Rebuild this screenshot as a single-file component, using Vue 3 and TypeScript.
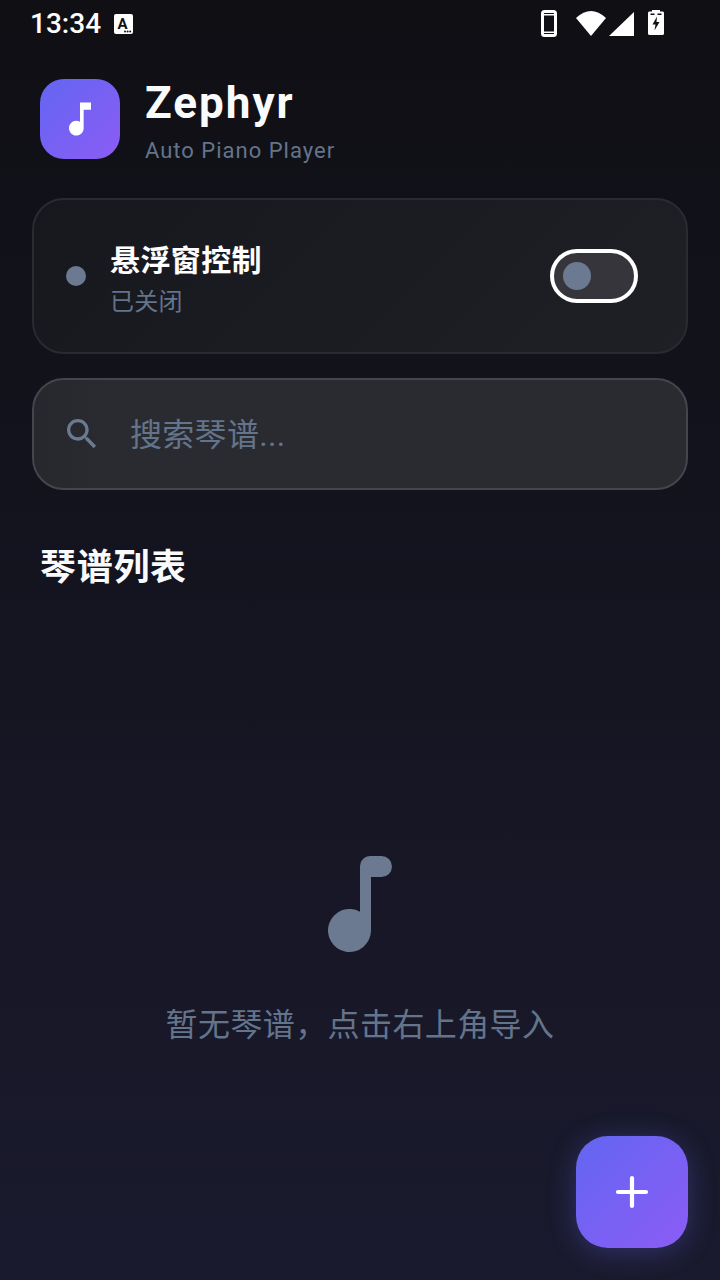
<template>
  <div class="screen">
    <div class="status-bar">
      <div class="status-left">
        <span class="clock">13:34</span>
        <svg class="status-a" viewBox="0 0 19 20" aria-hidden="true">
          <rect x="0" y="0" width="19" height="20" rx="2" fill="#fff" />
          <text x="8.500" y="14.500" text-anchor="middle" class="status-a-letter">A</text>
          <circle cx="11" cy="17.500" r="1" fill="#111" />
          <circle cx="13.600" cy="17.500" r="1" fill="#111" />
          <circle cx="16.200" cy="17.500" r="1" fill="#111" />
        </svg>
      </div>
      <div class="status-right">
        <svg class="phone" width="16" height="27" viewBox="0 0 16 27" aria-hidden="true">
          <rect x="1.500" y="1.500" width="13" height="24" rx="2" fill="none" stroke="#fff" stroke-width="3" />
          <rect x="1" y="4" width="14" height="1.500" fill="#fff" />
          <rect x="1" y="21.500" width="14" height="1.500" fill="#fff" />
        </svg>
        <svg class="wifi" width="30" height="25" viewBox="0 0 30 25" aria-hidden="true">
          <path d="M0 7Q15-7 30 7L15 25z" fill="#fff" />
        </svg>
        <svg class="signal" width="25" height="24" viewBox="0 0 25 24" aria-hidden="true">
          <path d="M25 0v24H0z" fill="#fff" />
        </svg>
        <svg class="battery" width="16" height="25" viewBox="0 0 16 25" aria-hidden="true">
          <path
            fill="#fff"
            d="M4 0h8v1.500h2.500c.8 0 1.500.7 1.500 1.500v20.500c0 .8-.7 1.500-1.500 1.500h-13C.7 25 0 24.300 0 23.500V3c0-.8.7-1.500 1.500-1.500H4z"
          />
          <path fill="#111" d="M9 6.500 4.500 14.500h3L6.500 20.500l5-8.500H8.500z" />
          <rect x="2.500" y="3.500" width="4" height="1.500" fill="#111" />
          <rect x="9.500" y="3.500" width="4" height="1.500" fill="#111" />
        </svg>
      </div>
    </div>

    <header class="brand">
      <div class="brand-icon">
        <svg width="44" height="44" viewBox="0 0 24 24" fill="#fff" aria-hidden="true">
          <path d="M12 3v10.550c-.59-.34-1.270-.55-2-.55-2.210 0-4 1.790-4 4s1.790 4 4 4 4-1.790 4-4V7h4V3h-6z" />
        </svg>
      </div>
      <div class="brand-text">
        <div class="brand-title">Zephyr</div>
        <div class="brand-sub">Auto Piano Player</div>
      </div>
    </header>

    <section class="control-card">
      <span class="dot"></span>
      <div class="control-text">
        <div class="control-title">悬浮窗控制</div>
        <div class="control-state">已关闭</div>
      </div>
      <div class="toggle"><span class="toggle-thumb"></span></div>
    </section>

    <div class="search">
      <svg class="search-icon" width="40" height="40" viewBox="0 0 24 24" fill="#6b7a90" aria-hidden="true">
        <path
          d="M15.500 14h-.79l-.28-.27C15.410 12.590 16 11.110 16 9.500 16 5.910 13.090 3 9.500 3S3 5.910 3 9.500 5.910 16 9.500 16c1.610 0 3.090-.59 4.230-1.570l.27.28v.79l5 4.990L20.490 19l-4.990-5zm-6 0C7.010 14 5 11.990 5 9.500S7.010 5 9.500 5 14 7.010 14 9.500 11.990 14 9.500 14z"
        />
      </svg>
      <span class="search-placeholder">搜索琴谱...</span>
    </div>

    <h2 class="list-title">琴谱列表</h2>

    <div class="empty">
      <svg class="empty-icon" width="64" height="96" viewBox="0 0 64 96" fill="#6b7a90" aria-hidden="true">
        <path d="M32 55.700V10A10 10 0 0 1 42 0H53.500a10.500 10.500 0 0 1 0 21H43V74.500A21.500 21.500 0 1 1 32 55.700z" />
      </svg>
      <p class="empty-text">暂无琴谱，点击右上角导入</p>
    </div>

    <button class="fab" type="button" aria-label="导入">
      <svg width="48" height="48" viewBox="0 0 24 24" fill="none" stroke="#fff" stroke-width="2.100" stroke-linecap="round" aria-hidden="true">
        <path d="M12 5v14M5 12h14" />
      </svg>
    </button>
  </div>
</template>

<script setup lang="ts"></script>

<style>
html,
body {
  margin: 0;
  background: #0f0f14;
}
</style>

<style scoped>
.screen {
  position: relative;
  display: flex;
  flex-direction: column;
  box-sizing: border-box;
  width: 720px;
  height: 1280px;
  overflow: hidden;
  background: linear-gradient(180deg, #0f0f14 0%, #1a1a2e 100%);
  color: #fff;
  font-family: Roboto, "Noto Sans CJK SC", sans-serif;
}

.status-bar {
  display: flex;
  justify-content: space-between;
  height: 48px;
  padding: 0 56px 0 30px;
  flex: none;
}

.status-left {
  display: flex;
  align-items: center;
}

.status-right {
  display: flex;
  align-items: flex-start;
}

.clock {
  font-size: 28px;
  font-weight: 500;
  line-height: 48px;
}

.status-a {
  width: 19px;
  height: 20px;
  margin-left: 13px;
}

.status-a-letter {
  font-family: Roboto, sans-serif;
  font-size: 15px;
  font-weight: 700;
  fill: #111;
}

.phone {
  margin-top: 10px;
}

.wifi {
  margin: 11px 0 0 19px;
}

.signal {
  margin: 12px 0 0 3px;
}

.battery {
  margin: 10px 0 0 14px;
}

.brand {
  display: flex;
  align-items: center;
  gap: 25px;
  margin: 31px 0 0 40px;
  height: 80px;
}

.brand-icon {
  display: flex;
  align-items: center;
  justify-content: center;
  width: 80px;
  height: 80px;
  border-radius: 24px;
  background: linear-gradient(135deg, #6366f1, #8b5cf6);
}

.brand-text {
  display: flex;
  flex-direction: column;
  margin-top: 4px;
}

.brand-title {
  font-size: 44px;
  font-weight: 700;
  line-height: 54px;
  letter-spacing: 2px;
  color: #f8fafc;
}

.brand-sub {
  margin-top: 5px;
  font-size: 22px;
  line-height: 32px;
  letter-spacing: 1px;
  color: #64748b;
}

.control-card {
  display: flex;
  align-items: center;
  box-sizing: border-box;
  height: 156px;
  margin: 39px 32px 0;
  padding: 0 48px 0 32px;
  border: 2px solid #2a2b30;
  border-radius: 32px;
  background: linear-gradient(135deg, #17181e, #1f2026);
}

.dot {
  width: 20px;
  height: 20px;
  border-radius: 50%;
  background: #6b7a90;
  flex: none;
}

.control-text {
  flex: 1;
  margin-left: 24px;
  padding-top: 6px;
}

.control-title {
  font-size: 30px;
  font-weight: 700;
  line-height: 42px;
  letter-spacing: 0.4px;
}

.control-state {
  margin-top: 3px;
  font-size: 24px;
  line-height: 34px;
  letter-spacing: 0.3px;
  color: #64748b;
}

.toggle {
  display: flex;
  align-items: center;
  box-sizing: border-box;
  width: 88px;
  height: 54px;
  padding-left: 9px;
  border: 4px solid #fff;
  border-radius: 27px;
  background: #35353b;
}

.toggle-thumb {
  width: 28px;
  height: 28px;
  border-radius: 50%;
  background: #6b7a90;
}

.search {
  display: flex;
  align-items: center;
  box-sizing: border-box;
  height: 112px;
  margin: 24px 32px 0;
  padding: 0 28px;
  border: 2px solid #45464c;
  border-radius: 32px;
  background: linear-gradient(90deg, #27282d, #2a2b31 12%);
}

.search-placeholder {
  margin-left: 28px;
  padding-bottom: 4px;
  font-size: 32px;
  letter-spacing: 0.3px;
  color: #64748b;
}

.list-title {
  margin: 53px 0 0 40px;
  font-size: 36px;
  font-weight: 700;
  line-height: 50px;
  letter-spacing: 0.7px;
  color: #f8fafc;
}

.empty {
  display: flex;
  flex-direction: column;
  align-items: center;
  margin-top: 263px;
}

.empty-icon {
  display: block;
}

.empty-text {
  margin: 51px 0 0;
  font-size: 32px;
  line-height: 44px;
  letter-spacing: 0.4px;
  color: #64748b;
}

.fab {
  position: absolute;
  right: 32px;
  bottom: 32px;
  display: flex;
  align-items: center;
  justify-content: center;
  width: 112px;
  height: 112px;
  padding: 0;
  border: none;
  border-radius: 32px;
  background: linear-gradient(135deg, #6366f1, #8b5cf6);
  box-shadow: 0 4px 28px rgba(99, 102, 241, 0.32);
}
</style>
